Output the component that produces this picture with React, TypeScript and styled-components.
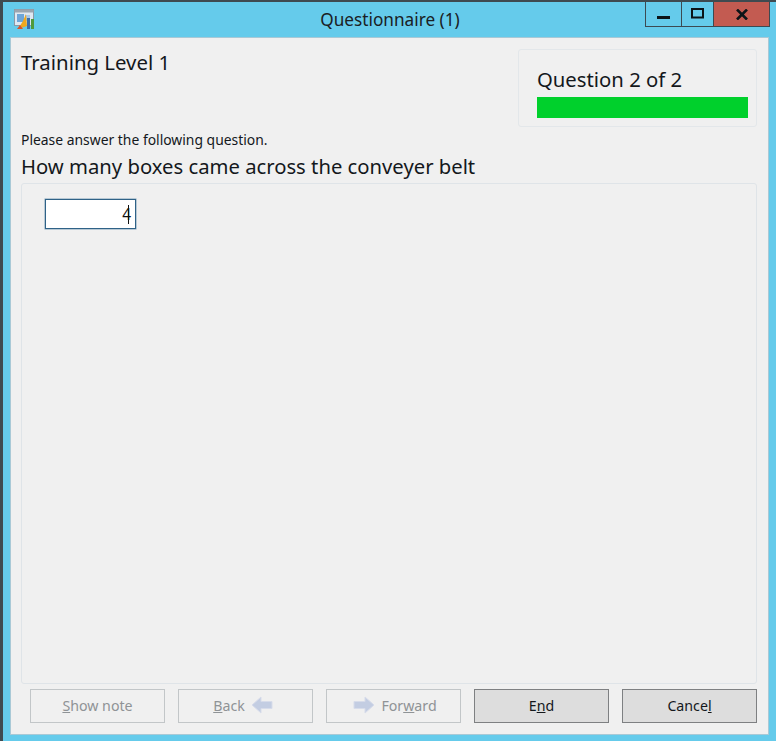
import React from "react";
import styled, { createGlobalStyle } from "styled-components";

const Global = createGlobalStyle`
  html, body { margin: 0; padding: 0; background: #65cbeb; }
  * { box-sizing: border-box; }
`;

const Win = styled.div`
  width: 776px;
  height: 741px;
  background: #65cbeb;
  border-top: 2px solid #3f4a50;
  border-left: 3px solid #3f4a50;
  display: flex;
  flex-direction: column;
  font-family: "Noto Sans", "Open Sans", sans-serif;
  color: #14181c;
  overflow: hidden;
`;

const TitleBar = styled.div`
  height: 36px;
  flex: none;
  display: grid;
  grid-template-columns: 1fr auto 1fr;
  align-items: start;
`;

const AppIcon = styled.svg`
  width: 21px;
  height: 21px;
  margin: 7px 0 0 11px;
`;

const Title = styled.div`
  font-size: 17.2px;
  line-height: 22px;
  margin-top: 7px;
  margin-left: 1px;
  color: #1a2024;
`;

const Controls = styled.div`
  justify-self: end;
  display: flex;
  height: 27px;
  margin-right: 6px;
  border: 1px solid #3c4a52;
  border-top: none;
  margin-top: -2px;
  padding-top: 2px;
  width: 125px;
`;

const Ctl = styled.div<{ $w: number; $red?: boolean }>`
  width: ${(p) => p.$w}px;
  flex: none;
  display: flex;
  align-items: center;
  justify-content: center;
  background: ${(p) => (p.$red ? "#c35b51" : "transparent")};
  & + & { border-left: 1px solid #3c4a52; }
`;

const Client = styled.div`
  height: 696px;
  flex: none;
  margin-left: 8px;
  width: 757px;
  background: #f0f0f0;
  display: flex;
  flex-direction: column;
  padding: 11px 11px 11px 10px;
  box-shadow: 0 0 0 1px #a9c9d6;
`;

const Header = styled.div`
  display: flex;
  justify-content: space-between;
  align-items: flex-start;
  height: 78px;
  flex: none;
`;

const LevelName = styled.div`
  font-size: 20.4px;
  line-height: 26px;
  color: #14181c;
`;

const ProgressCard = styled.div`
  width: 239px;
  height: 78px;
  border: 1px solid #e3e7ea;
  border-radius: 3px;
  padding: 16px 8px 0 18px;
`;

const ProgressLabel = styled.div`
  font-size: 20.3px;
  line-height: 26px;
  color: #14181c;
`;

const ProgressBar = styled.div`
  height: 21px;
  margin-top: 5px;
  background: #00d02c;
`;

const Hint = styled.div`
  font-size: 13.9px;
  line-height: 18px;
  margin-top: 4px;
`;

const Question = styled.div`
  font-size: 20.25px;
  line-height: 26px;
  margin-top: 4px;
`;

const Panel = styled.div`
  flex: 1;
  margin-top: 4px;
  border: 1px solid #dfe4e8;
  border-radius: 3px;
  padding: 15px 23px;
`;

const NumberField = styled.div`
  width: 91px;
  height: 30px;
  background: #fff;
  border: 1px solid #2f6287;
  box-shadow: 0 0 0 0.5px #7fa0b8;
  display: flex;
  align-items: center;
  justify-content: flex-end;
  padding-right: 6px;
  font-size: 15.5px;
  color: #111;
`;

const Caret = styled.span`
  display: inline-block;
  width: 1px;
  height: 19px;
  background: #111;
  margin-left: -3px;
`;

const ButtonRow = styled.div`
  display: flex;
  gap: 13px;
  padding-left: 9px;
  margin-top: 5px;
  height: 34px;
  flex: none;
`;

const Btn = styled.div<{ $on?: boolean; $nudge?: number }>`
  width: 135px;
  height: 34px;
  display: flex;
  align-items: center;
  justify-content: center;
  gap: 6px;
  padding-bottom: 2px;
  padding-left: ${(p) => (p.$nudge && p.$nudge > 0 ? p.$nudge : 0)}px;
  padding-right: ${(p) => (p.$nudge && p.$nudge < 0 ? -p.$nudge : 0)}px;
  font-size: 14.2px;
  border: 1px solid ${(p) => (p.$on ? "#7e8082" : "#c2c6c8")};
  background: ${(p) => (p.$on ? "#dddddd" : "#f0f0f0")};
  color: ${(p) => (p.$on ? "#14181c" : "#8f9396")};
`;

const ArrowIcon = styled.svg<{ $flip?: boolean }>`
  flex: none;
  transform: ${(p) => (p.$flip ? "scaleX(-1)" : "none")};
`;

const Arrow = ({ flip }: { flip?: boolean }) => (
  <ArrowIcon $flip={flip} width="22" height="18" viewBox="0 0 22 18">
    <path d="M1 5.5h11V1l9 8-9 8v-4.5H1z" fill="#c3cde2" stroke="#d7dcea" strokeWidth="1" />
  </ArrowIcon>
);

export default function App() {
  return (
    <>
      <Global />
      <Win>
        <TitleBar>
          <AppIcon viewBox="0 0 21 21">
            <rect x="0.5" y="0.5" width="19" height="16" fill="#dfe8f2" stroke="#8d99a5" />
            <rect x="0.5" y="0.5" width="19" height="3" fill="#9aa5b0" />
            <rect x="3" y="5" width="7" height="8" fill="#6ea6d8" />
            <rect x="11" y="6" width="5" height="6" fill="#a9c8e8" />
            <path d="M4 20l5-8 3-7 1 12z" fill="#f0a81e" />
            <path d="M3 20l3-4 3 4z" fill="#d8542a" />
            <rect x="13" y="9" width="3" height="11" fill="#3d6fa8" />
            <rect x="17" y="10" width="3" height="10" fill="#4f9a3c" />
          </AppIcon>
          <Title>Questionnaire (1)</Title>
          <Controls>
            <Ctl $w={35}>
              <svg width="13" height="13" viewBox="0 0 13 13"><rect y="8" width="13" height="3" fill="#0c1418" /></svg>
            </Ctl>
            <Ctl $w={32}>
              <svg width="13" height="12" viewBox="0 0 13 12"><rect x="1" y="1" width="11" height="8.5" fill="none" stroke="#0c1418" strokeWidth="2" /></svg>
            </Ctl>
            <Ctl $w={56} $red>
              <svg width="12" height="11" viewBox="0 0 12 11"><path d="M1 0.5l10 10M11 0.5l-10 10" stroke="#0c1418" strokeWidth="2.6" /></svg>
            </Ctl>
          </Controls>
        </TitleBar>
        <Client>
          <Header>
            <LevelName>Training Level 1</LevelName>
            <ProgressCard>
              <ProgressLabel>Question 2 of 2</ProgressLabel>
              <ProgressBar />
            </ProgressCard>
          </Header>
          <Hint>Please answer the following question.</Hint>
          <Question>How many boxes came across the conveyer belt</Question>
          <Panel>
            <NumberField>4<Caret /></NumberField>
          </Panel>
          <ButtonRow>
            <Btn><span><u>S</u>how note</span></Btn>
            <Btn $nudge={-5}><span><u>B</u>ack</span><Arrow flip /></Btn>
            <Btn $nudge={3}><Arrow /><span>For<u>w</u>ard</span></Btn>
            <Btn $on><span>E<u>n</u>d</span></Btn>
            <Btn $on><span>Cance<u>l</u></span></Btn>
          </ButtonRow>
        </Client>
      </Win>
    </>
  );
}
